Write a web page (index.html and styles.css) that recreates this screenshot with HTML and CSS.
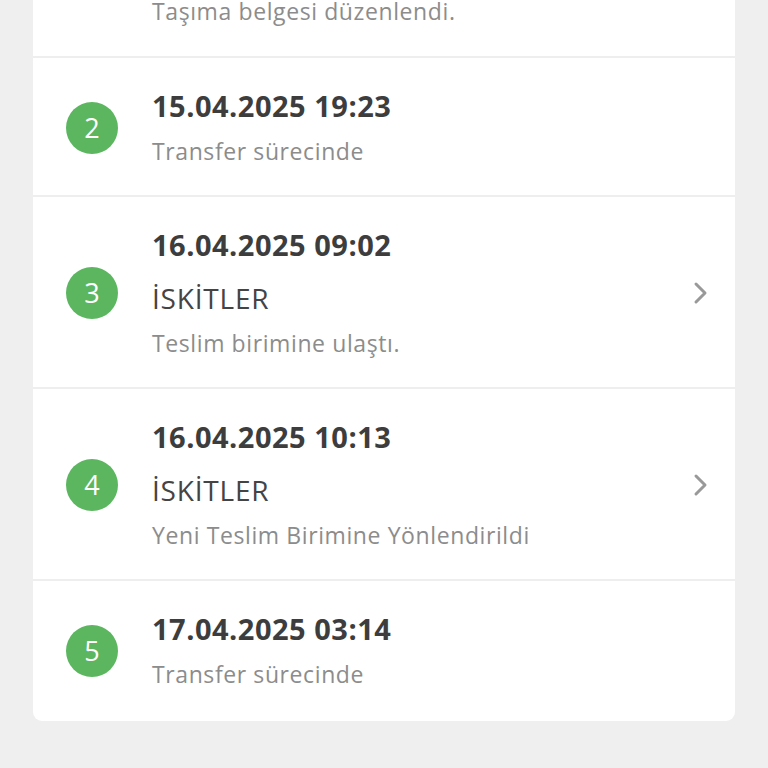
FILE: index.html
```html
<!DOCTYPE html>
<html lang="tr">
<head>
  <meta charset="UTF-8" />
  <title>Gönderi Hareketleri</title>
  <link rel="stylesheet" href="styles.css">
</head>
<body>
  <div class="track-card">
    <div class="step step-cut">
      <div class="step-body">
        <div class="step-desc">Taşıma belgesi düzenlendi.</div>
      </div>
    </div>

    <div class="step">
      <span class="step-no">2</span>
      <div class="step-body">
        <div class="step-date">15.04.2025 19:23</div>
        <div class="step-desc">Transfer sürecinde</div>
      </div>
    </div>

    <div class="step">
      <span class="step-no">3</span>
      <div class="step-body">
        <div class="step-date">16.04.2025 09:02</div>
        <div class="step-unit">İSKİTLER</div>
        <div class="step-desc">Teslim birimine ulaştı.</div>
      </div>
      <svg class="chevron" width="16" height="24" viewBox="0 0 16 24">
        <path d="M3 3 L12 12 L3 21" fill="none" stroke="#999" stroke-width="3" stroke-linecap="round" stroke-linejoin="round"/>
      </svg>
    </div>

    <div class="step">
      <span class="step-no">4</span>
      <div class="step-body">
        <div class="step-date">16.04.2025 10:13</div>
        <div class="step-unit">İSKİTLER</div>
        <div class="step-desc">Yeni Teslim Birimine Yönlendirildi</div>
      </div>
      <svg class="chevron" width="16" height="24" viewBox="0 0 16 24">
        <path d="M3 3 L12 12 L3 21" fill="none" stroke="#999" stroke-width="3" stroke-linecap="round" stroke-linejoin="round"/>
      </svg>
    </div>

    <div class="step">
      <span class="step-no">5</span>
      <div class="step-body">
        <div class="step-date">17.04.2025 03:14</div>
        <div class="step-desc">Transfer sürecinde</div>
      </div>
    </div>
  </div>
</body>
</html>
```

FILE: styles.css
```css
body {
  margin: 0;
  background: #efefef;
  font-family: "Open Sans", Lato, sans-serif;
}
.track-card {
  background: #fff;
  margin: 0 33px;
  border-radius: 0 0 9px 9px;
}
.step {
  display: flex;
  align-items: center;
  padding: 31px 26px 29px 33px;
  border-bottom: 2px solid #eeeeee;
}
.step:last-child {
  border-bottom: none;
  padding-bottom: 32px;
}
.step-cut {
  padding-top: 0;
  padding-bottom: 30px;
  margin-top: -4px;
}
.step-no {
  flex: none;
  width: 52px;
  height: 52px;
  border-radius: 50%;
  background: #5cb660;
  color: #fff;
  font-size: 27px;
  line-height: 52px;
  text-align: center;
  margin-right: 34px;
}
.step-cut .step-body {
  margin-left: 86px;
}
.step-body {
  flex: 1;
}
.step-date {
  font-size: 29px;
  line-height: 34px;
  font-weight: 700;
  letter-spacing: 0.5px;
  color: #3d3d3d;
}
.step-unit {
  font-size: 28px;
  line-height: 34px;
  letter-spacing: 0.8px;
  color: #444;
  margin-top: 19px;
}
.step-desc {
  font-size: 23px;
  line-height: 30px;
  letter-spacing: 0.6px;
  color: #8c8c8c;
  margin-top: 13px;
}
.step-cut .step-desc {
  margin-top: 0;
}
.step-unit + .step-desc {
  margin-top: 13px;
}
.chevron {
  flex: none;
}
```
